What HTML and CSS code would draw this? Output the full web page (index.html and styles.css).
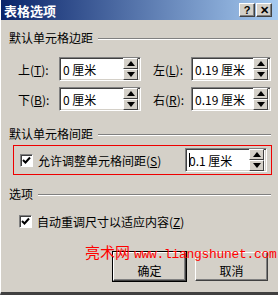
FILE: index.html
```html
<!DOCTYPE html>
<html>
	<head>
		<meta charset="utf-8">
		<title>表格选项</title>
		<link rel="stylesheet" href="styles.css">
	</head>
	<body>
		<div class="window">
			<div class="titlebar">
				<span class="title">表格选项</span>
				<div class="tbButtons">
					<span class="tbBtn">?</span>
					<span class="tbBtn tbClose">✕</span>
				</div>
			</div>

			<div class="groupHead"><span>默认单元格边距</span></div>
			<div class="margins">
				<div class="field left">
					<span class="lbl">上(<u>T</u>):</span>
					<div class="spin"><span class="val">0 厘米</span><div class="arrows"><span class="up"></span><span class="down"></span></div></div>
				</div>
				<div class="field right">
					<span class="lbl">左(<u>L</u>):</span>
					<div class="spin"><span class="val">0.19 厘米</span><div class="arrows"><span class="up"></span><span class="down"></span></div></div>
				</div>
				<div class="field left">
					<span class="lbl">下(<u>B</u>):</span>
					<div class="spin"><span class="val">0 厘米</span><div class="arrows"><span class="up"></span><span class="down"></span></div></div>
				</div>
				<div class="field right">
					<span class="lbl">右(<u>R</u>):</span>
					<div class="spin"><span class="val">0.19 厘米</span><div class="arrows"><span class="up"></span><span class="down"></span></div></div>
				</div>
			</div>

			<div class="groupHead second"><span>默认单元格间距</span></div>
			<div class="spacing">
				<span class="check"><svg width="9" height="9" viewBox="0 0 9 9"><path d="M1 4 L3.5 6.5 L8 1.5" stroke="#000" stroke-width="2" fill="none"/></svg></span>
				<span class="checkText">允许调整单元格间距(<u>S</u>)</span>
				<div class="spin small"><span class="val"><span class="caret"></span>0.1 厘米</span><div class="arrows"><span class="up"></span><span class="down"></span></div></div>
			</div>

			<div class="groupHead third"><span>选项</span></div>
			<div class="option">
				<span class="check"><svg width="9" height="9" viewBox="0 0 9 9"><path d="M1 4 L3.5 6.5 L8 1.5" stroke="#000" stroke-width="2" fill="none"/></svg></span>
				<span class="checkText">自动重调尺寸以适应内容(<u>Z</u>)</span>
			</div>

			<div class="buttons">
				<span class="btn default">确定</span>
				<span class="btn">取消</span>
			</div>

			<!-- 水印 -->
			<div class="mark"><span class="markCn">亮术网</span> <span class="markEn">www.liangshunet.com</span></div>
		</div>
	</body>
</html>
```

FILE: styles.css
```css
body{
	margin:0;
	font-family:"Liberation Sans","Noto Sans CJK SC",sans-serif;
	font-size:12px;
	color:#000;
}
.window{
	position:relative;
	width:277px;height:292px;
	background:#d4d0c8;
	border-left:1px solid #fff;
	border-bottom:3px solid #404040;
	box-shadow:inset 1px 0 #d4d0c8;
	overflow:hidden;
}
.titlebar{
	height:20px;
	display:flex;
	align-items:center;
	justify-content:space-between;
	background:linear-gradient(to right,#0a246a,#a6caf0);
	padding:0 6px 0 3px;
}
.title{
	color:#fff;
	font-weight:bold;
	font-size:13px;
	font-family:"Noto Sans CJK SC",sans-serif;
}
.tbButtons{display:flex;gap:1px;}
.tbBtn{
	width:14px;height:12px;
	background:#d4d0c8;
	border:1px solid;
	border-color:#fff #404040 #404040 #fff;
	box-shadow:inset -1px -1px #808080;
	font-size:11px;font-weight:bold;
	line-height:12px;
	text-align:center;
}
.groupHead{
	display:flex;
	align-items:center;
	gap:5px;
	height:14px;
	margin:10px 7px 0 8px;
	font-family:"Noto Sans CJK SC",sans-serif;
}
.groupHead::after{
	content:"";
	flex:1;
	border-top:1px solid #808080;
	border-bottom:1px solid #fff;
	margin-top:3px;
}
.groupHead.second{margin-top:15px;}
.groupHead.third{margin-top:11px;}
.margins{
	display:grid;
	grid-template-columns:124px 120px;
	column-gap:11px;
	row-gap:6px;
	margin:13px 0 0 17px;
}
.field{display:flex;align-items:center;height:24px;}
.lbl{font-family:"Noto Sans CJK SC",sans-serif;}
.left .lbl{width:41px;}
.right .lbl{width:38px;}
.spin{
	display:flex;
	align-items:center;
	justify-content:space-between;
	width:82px;height:24px;
	background:#fff;
	border:1px solid;
	border-color:#808080 #fff #fff #808080;
	box-shadow:inset 1px 1px #404040,inset -1px -1px #d4d0c8;
	padding-right:1px;
	box-sizing:border-box;
}
.right .spin{width:80px;}
.val{padding-left:3px;font-family:"Noto Sans CJK SC",sans-serif;display:flex;align-items:center;white-space:pre;}
.arrows{display:flex;flex-direction:column;margin-right:1px;}
.arrows span{
	width:13px;height:9px;
	background:#d4d0c8;
	border:1px solid;
	border-color:#fff #404040 #404040 #fff;
	display:flex;
	align-items:center;
	justify-content:center;
}
.arrows span::before{
	content:"";
	border-left:4px solid transparent;
	border-right:4px solid transparent;
}
.up::before{border-bottom:5px solid #000;}
.down::before{border-top:5px solid #000;}
.spacing{
	display:flex;
	align-items:center;
	height:28px;
	margin:5px 6px 0 12px;
	border:1px solid #e00;
	padding:0 4px 0 6px;
}
.spin.small{width:82px;margin-left:auto;}
.caret{width:1px;height:14px;background:#000;margin-right:-1px;}
.check{
	width:13px;height:13px;
	box-sizing:border-box;
	background:#fff;
	border:1px solid;
	border-color:#808080 #fff #fff #808080;
	box-shadow:inset 1px 1px #404040;
	display:flex;
	align-items:center;
	justify-content:center;
	margin-right:5px;
}
.checkText{font-family:"Noto Sans CJK SC",sans-serif;}
.option{
	display:flex;
	align-items:center;
	height:16px;
	margin:13px 0 0 18px;
}
.buttons{
	display:flex;
	gap:9px;
	margin:23px 0 0 112px;
}
.btn{
	width:73px;height:29px;
	background:#d4d0c8;
	border:1px solid;
	border-color:#fff #404040 #404040 #fff;
	box-shadow:inset -1px -1px #808080;
	display:flex;
	align-items:center;
	justify-content:center;
	font-family:"Noto Sans CJK SC",sans-serif;
	padding-top:7px;
	box-sizing:border-box;
}
.btn.default{
	outline:1px solid #000;
	outline-offset:0;
}
.mark{
	position:absolute;
	left:84px;top:244px;
	line-height:16px;
	color:#f00;
	white-space:nowrap;
	display:flex;
	align-items:baseline;
	gap:4px;
}
.markCn{font-size:15px;font-family:"Noto Sans CJK SC",sans-serif;}
.markEn{font-size:13px;font-family:"Liberation Mono",monospace;letter-spacing:-0.3px;}
```
